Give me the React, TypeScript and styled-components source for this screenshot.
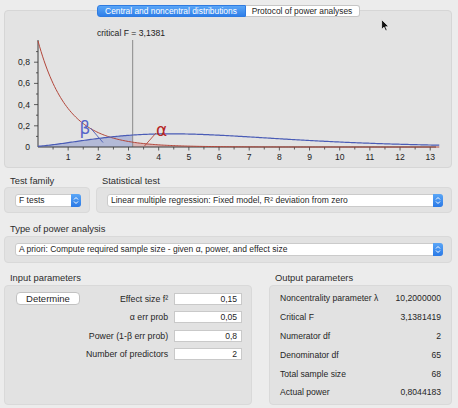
import React from 'react';
import styled, { createGlobalStyle } from 'styled-components';

const GlobalStyle = createGlobalStyle`
  html, body { margin: 0; padding: 0; background: #ececec; }
  body { font-family: "Liberation Sans", Arial, sans-serif; color: #2a2a2a; }
  #root { width: 458px; height: 408px; overflow: hidden; }
`;

const Window = styled.div`
  position: relative;
  width: 458px;
  height: 408px;
  box-sizing: border-box;
  padding: 5px 6px 0 4px;
  display: flex;
  flex-direction: column;
`;

const TabBar = styled.div`
  position: relative;
  z-index: 1;
  display: flex;
  justify-content: center;
  height: 12px;
`;

const Tab = styled.div<{ $active?: boolean; $w: number }>`
  width: ${(p) => p.$w}px;
  height: 12px;
  box-sizing: border-box;
  font-size: 8.4px;
  line-height: 11px;
  text-align: center;
  white-space: nowrap;
  color: ${(p) => (p.$active ? '#ffffff' : '#1e1e1e')};
  background: ${(p) => (p.$active ? 'linear-gradient(#5aa6f7, #2f7fe9)' : '#ffffff')};
  border: 1px solid ${(p) => (p.$active ? '#2f7be0' : '#c6c6c6')};
  border-radius: ${(p) => (p.$active ? '3px 0 0 3px' : '0 3px 3px 0')};
  ${(p) => (p.$active ? '' : 'border-left: none;')}
`;

const ChartPanel = styled.div`
  margin-top: -7px;
  height: 158px;
  box-sizing: border-box;
  background: #e3e3e3;
  border: 1px solid #d6d6d6;
  border-radius: 4px;
  overflow: hidden;
`;

const ChartSvg = styled.svg`
  display: block;
  width: 446px;
  height: 156px;
`;

const SectionLabel = styled.div<{ $mt: number }>`
  margin-top: ${(p) => p.$mt}px;
  height: 12px;
  line-height: 12px;
  padding-left: 6px;
  font-size: 9.4px;
  color: #2c2c2c;
  white-space: nowrap;
`;

const TwoCols = styled.div<{ $cols: string; $gap: number }>`
  display: grid;
  grid-template-columns: ${(p) => p.$cols};
  column-gap: ${(p) => p.$gap}px;
`;

const Column = styled.div`
  display: flex;
  flex-direction: column;
`;

const GroupBox = styled.div<{ $h: number; $mt?: number }>`
  margin-top: ${(p) => p.$mt ?? 0}px;
  height: ${(p) => p.$h}px;
  box-sizing: border-box;
  background: #e2e2e2;
  border: 1px solid #d9d9d9;
  border-radius: 4px;
`;

const SelectRow = styled(GroupBox)`
  display: flex;
  align-items: center;
  padding: 0 8px 0 10px;
`;

const SelectBox = styled.div`
  flex: 1;
  height: 13px;
  box-sizing: border-box;
  display: flex;
  align-items: stretch;
  background: #ffffff;
  border: 1px solid #cbcbcb;
  border-radius: 3px;
`;

const SelectText = styled.div`
  flex: 1;
  padding-left: 3px;
  font-size: 8.5px;
  line-height: 11px;
  color: #1f1f1f;
  white-space: nowrap;
  overflow: hidden;
`;

const ArrowButton = styled.div`
  width: 10px;
  margin: -1px -1px -1px 0;
  border-radius: 0 3px 3px 0;
  background: linear-gradient(#5aa6f7, #2a79e6);
  display: flex;
  align-items: center;
  justify-content: center;
`;

const InputGrid = styled(GroupBox)`
  display: grid;
  grid-template-columns: 64px 1fr 68px;
  grid-auto-rows: 12px;
  column-gap: 6px;
  row-gap: 6.4px;
  padding: 7px 11px 0 11px;
`;

const Button = styled.div`
  height: 13px;
  margin-top: -1px;
  box-sizing: border-box;
  background: #ffffff;
  border: 1px solid #c2c2c2;
  border-radius: 4px;
  font-size: 9.5px;
  line-height: 11px;
  text-align: center;
  color: #1f1f1f;
`;

const ParamLabel = styled.div`
  grid-column: 2;
  text-align: right;
  font-size: 8.8px;
  line-height: 12px;
  color: #262626;
  white-space: nowrap;
`;

const NumberField = styled.div`
  grid-column: 3;
  height: 12px;
  box-sizing: border-box;
  background: #ffffff;
  border: 1px solid #c9c9c9;
  text-align: right;
  padding-right: 4px;
  font-size: 8.6px;
  line-height: 10px;
  color: #1f1f1f;
`;

const OutputBox = styled(GroupBox)`
  display: flex;
  flex-direction: column;
  padding: 3px 10px 0 10px;
`;

const OutputRow = styled.div`
  height: 18.8px;
  display: flex;
  align-items: center;
  justify-content: space-between;
  font-size: 8.6px;
  color: #262626;
  white-space: nowrap;
`;

const Cursor = styled.svg`
  position: absolute;
  left: 381px;
  top: 19px;
  width: 9px;
  height: 13px;
`;

/* ---------- math for the distribution chart ---------- */
const LC = [0.99999999999980993, 676.5203681218851, -1259.1392167224028, 771.32342877765313,
  -176.61502916214059, 12.507343278686905, -0.13857109526572012, 9.9843695780195716e-6, 1.5056327351493116e-7];
function lgamma(z: number): number {
  if (z < 0.5) return Math.log(Math.PI / Math.sin(Math.PI * z)) - lgamma(1 - z);
  z -= 1;
  let x = LC[0];
  for (let i = 1; i < 9; i++) x += LC[i] / (z + i);
  const t = z + 7.5;
  return 0.5 * Math.log(2 * Math.PI) + (z + 0.5) * Math.log(t) - t + Math.log(x);
}
function fpdf(x: number, d1: number, d2: number): number {
  if (x < 0) return 0;
  const a = d1 / 2 - 1;
  if (x === 0 && a > 0) return 0;
  let l = lgamma((d1 + d2) / 2) - lgamma(d1 / 2) - lgamma(d2 / 2) + (d1 / 2) * Math.log(d1 / d2)
    - ((d1 + d2) / 2) * Math.log(1 + (d1 * x) / d2);
  if (a !== 0) l += a * Math.log(x);
  return Math.exp(l);
}
function ncfpdf(x: number, d1: number, d2: number, lam: number): number {
  let s = 0;
  const h = lam / 2;
  for (let k = 0; k < 80; k++) {
    const w = Math.exp(-h + k * Math.log(h) - lgamma(k + 1));
    const dd = d1 + 2 * k;
    s += w * (d1 / dd) * fpdf((d1 * x) / dd, dd, d2);
  }
  return s;
}

const X0 = 38;
const XS = 30.17;
const Y0 = 147;
const YS = 106;
const CRIT = 3.1381419;
const XMAX = 13.3;
const px = (v: number) => X0 + v * XS;
const py = (v: number) => Y0 - v * YS;

function curve(fn: (x: number) => number, from: number, to: number, step = 0.05): string[] {
  const pts: string[] = [];
  for (let x = from; x < to; x += step) pts.push(`${px(x).toFixed(2)},${py(fn(x)).toFixed(2)}`);
  pts.push(`${px(to).toFixed(2)},${py(fn(to)).toFixed(2)}`);
  return pts;
}

const central = (x: number) => fpdf(x, 2, 65);
const noncentral = (x: number) => ncfpdf(x, 2, 65, 10.2);

const Chart: React.FC = () => {
  const red = curve(central, 0, XMAX);
  const blue = curve(noncentral, 0, XMAX);
  const beta = curve(noncentral, 0, CRIT);
  const alpha = curve(central, CRIT, XMAX);
  const betaPoly = `${px(0)},${Y0} ${beta.join(' ')} ${px(CRIT)},${Y0}`;
  const alphaPoly = `${px(CRIT)},${Y0} ${alpha.join(' ')} ${px(XMAX)},${Y0}`;
  const xTicks: number[] = [];
  for (let v = 0.5; v <= 13.01; v += 0.5) xTicks.push(v);
  const yTicks: number[] = [];
  for (let v = 0.1; v <= 0.91; v += 0.1) yTicks.push(v);
  const fontProps = { fontFamily: '"Liberation Sans", Arial, sans-serif', fontSize: 8.6, fill: '#222' };
  return (
    <ChartSvg viewBox="5 11 446 156">
      <polygon points={betaPoly} fill="#6f80c6" fillOpacity={0.42} />
      <polygon points={alphaPoly} fill="#c86060" fillOpacity={0.35} />
      <line x1={px(CRIT)} y1={40} x2={px(CRIT)} y2={Y0} stroke="#8a8a8a" strokeWidth={1} />
      <text x={131} y={35.5} textAnchor="middle" {...fontProps}>critical F = 3,1381</text>
      {/* axes */}
      <line x1={X0} y1={40} x2={X0} y2={Y0} stroke="#3a3a3a" strokeWidth={1} />
      <line x1={X0} y1={Y0} x2={436} y2={Y0} stroke="#3a3a3a" strokeWidth={1} />
      {yTicks.map((v, i) => (
        <line key={`yt${i}`} x1={i % 2 === 1 ? X0 - 4 : X0 - 2} y1={py(v)} x2={X0} y2={py(v)} stroke="#3a3a3a" strokeWidth={0.8} />
      ))}
      {['0', '0,2', '0,4', '0,6', '0,8'].map((t, i) => (
        <text key={`yl${i}`} x={30} y={py(i * 0.2) + 3} textAnchor="end" {...fontProps}>{t}</text>
      ))}
      {xTicks.map((v, i) => (
        <line key={`xt${i}`} x1={px(v)} y1={Y0} x2={px(v)} y2={Y0 + (i % 2 === 1 ? 3.5 : 2.5)} stroke="#3a3a3a" strokeWidth={0.8} />
      ))}
      {Array.from({ length: 13 }, (_, i) => i + 1).map((n) => (
        <text key={`xl${n}`} x={px(n)} y={160} textAnchor="middle" {...fontProps}>{n}</text>
      ))}
      <polyline points={red.join(' ')} fill="none" stroke="#b2463a" strokeWidth={1} />
      <polyline points={blue.join(' ')} fill="none" stroke="#4a5cb6" strokeWidth={1.2} />
      {/* labels */}
      <line x1={90.5} y1={128} x2={103} y2={142.5} stroke="#4a5cb6" strokeWidth={0.9} />
      <text x={79.5} y={134} fontFamily='"DejaVu Sans", sans-serif' fontSize={17} fill="#5565c9">β</text>
      <line x1={156} y1={133} x2={144.5} y2={146} stroke="#b2463a" strokeWidth={0.9} />
      <text x={156} y={135.5} fontFamily='"DejaVu Sans", sans-serif' fontSize={17} fill="#b52525">α</text>
    </ChartSvg>
  );
};

const SelectArrows: React.FC = () => (
  <svg width="6" height="9" viewBox="0 0 6 9">
    <polyline points="1,3.5 3,1.5 5,3.5" fill="none" stroke="#fff" strokeWidth={1} />
    <polyline points="1,5.5 3,7.5 5,5.5" fill="none" stroke="#fff" strokeWidth={1} />
  </svg>
);

const Select: React.FC<{ children: React.ReactNode }> = ({ children }) => (
  <SelectBox>
    <SelectText>{children}</SelectText>
    <ArrowButton>
      <SelectArrows />
    </ArrowButton>
  </SelectBox>
);

const inputs = [
  { label: <>Effect size f²</>, value: '0,15' },
  { label: <>α err prob</>, value: '0,05' },
  { label: <>Power (1-β err prob)</>, value: '0,8' },
  { label: <>Number of predictors</>, value: '2' },
];

const outputs = [
  ['Noncentrality parameter λ', '10,2000000'],
  ['Critical F', '3,1381419'],
  ['Numerator df', '2'],
  ['Denominator df', '65'],
  ['Total sample size', '68'],
  ['Actual power', '0,8044183'],
];

export default function App() {
  return (
    <>
      <GlobalStyle />
      <Window>
        <TabBar>
          <Tab $active $w={149}>Central and noncentral distributions</Tab>
          <Tab $w={114}>Protocol of power analyses</Tab>
        </TabBar>
        <ChartPanel>
          <Chart />
        </ChartPanel>

        <TwoCols $cols="86px 356px" $gap={6}>
          <Column>
            <SectionLabel $mt={7}>Test family</SectionLabel>
            <SelectRow $h={26}>
              <Select>F tests</Select>
            </SelectRow>
          </Column>
          <Column>
            <SectionLabel $mt={7}>Statistical test</SectionLabel>
            <SelectRow $h={26}>
              <Select>Linear multiple regression: Fixed model, R² deviation from zero</Select>
            </SelectRow>
          </Column>
        </TwoCols>

        <SectionLabel $mt={10}>Type of power analysis</SectionLabel>
        <SelectRow $h={27} $mt={1}>
          <Select>A priori: Compute required sample size - given α, power, and effect size</Select>
        </SelectRow>

        <TwoCols $cols="248px 183px" $gap={17}>
          <Column>
            <SectionLabel $mt={9}>Input parameters</SectionLabel>
            <InputGrid $h={120} $mt={1}>
              {inputs.map((row, i) => (
                <React.Fragment key={i}>
                  {i === 0 ? <Button>Determine</Button> : <div />}
                  <ParamLabel>{row.label}</ParamLabel>
                  <NumberField>{row.value}</NumberField>
                </React.Fragment>
              ))}
            </InputGrid>
          </Column>
          <Column>
            <SectionLabel $mt={9}>Output parameters</SectionLabel>
            <OutputBox $h={120} $mt={1}>
              {outputs.map(([l, v]) => (
                <OutputRow key={l}>
                  <span>{l}</span>
                  <span>{v}</span>
                </OutputRow>
              ))}
            </OutputBox>
          </Column>
        </TwoCols>

        <Cursor viewBox="0 0 9 13">
          <path d="M0.6,0.6 L0.6,10.4 L3,8.2 L4.7,12 L6.2,11.3 L4.6,7.7 L7.8,7.7 Z" fill="#111" stroke="#fff" strokeWidth={0.7} />
        </Cursor>
      </Window>
    </>
  );
}
